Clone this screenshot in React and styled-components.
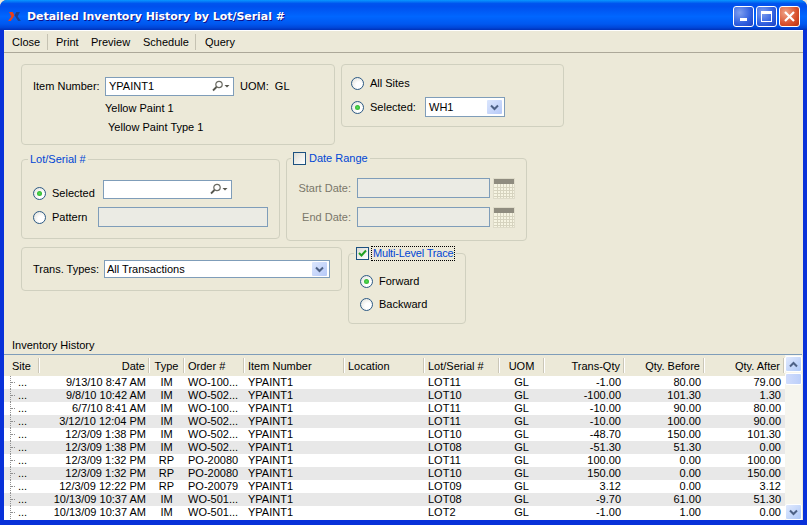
import React from 'react'
import styled, { createGlobalStyle } from 'styled-components'

const Global = createGlobalStyle`
  html, body { margin: 0; padding: 0; overflow: hidden; background: #ece9d8; }
  body { font-family: "Liberation Sans", Arial, sans-serif; font-size: 11px; color: #000; }
`

const COLUMNS = '35px 110px 35px 60px 100px 80px 75px 45px 80px 80px 80px'

const HEADERS = [
  ['Site', 'left'], ['Date', 'right'], ['Type', 'center'], ['Order #', 'left'], ['Item Number', 'left'],
  ['Location', 'left'], ['Lot/Serial #', 'left'], ['UOM', 'center'], ['Trans-Qty', 'right'],
  ['Qty. Before', 'right'], ['Qty. After', 'right'],
]

const ROWS = [
  ['9/13/10 8:47 AM', 'IM', 'WO-100...', 'LOT11', '-1.00', '80.00', '79.00'],
  ['9/8/10 10:42 AM', 'IM', 'WO-502...', 'LOT10', '-100.00', '101.30', '1.30'],
  ['6/7/10 8:41 AM', 'IM', 'WO-100...', 'LOT11', '-10.00', '90.00', '80.00'],
  ['3/12/10 12:04 PM', 'IM', 'WO-502...', 'LOT11', '-10.00', '100.00', '90.00'],
  ['12/3/09 1:38 PM', 'IM', 'WO-502...', 'LOT10', '-48.70', '150.00', '101.30'],
  ['12/3/09 1:38 PM', 'IM', 'WO-502...', 'LOT08', '-51.30', '51.30', '0.00'],
  ['12/3/09 1:32 PM', 'RP', 'PO-20080', 'LOT11', '100.00', '0.00', '100.00'],
  ['12/3/09 1:32 PM', 'RP', 'PO-20080', 'LOT10', '150.00', '0.00', '150.00'],
  ['12/3/09 12:22 PM', 'RP', 'PO-20079', 'LOT09', '3.12', '0.00', '3.12'],
  ['10/13/09 10:37 AM', 'IM', 'WO-501...', 'LOT08', '-9.70', '61.00', '51.30'],
  ['10/13/09 10:37 AM', 'IM', 'WO-501...', 'LOT2', '-1.00', '1.00', '0.00'],
]

const Window = styled.div`
  width: 807px;
  height: 525px;
  display: flex;
  flex-direction: column;
  background: #0831d9;
  border-radius: 7px 7px 0 0;
  overflow: hidden;
`

const TitleBar = styled.div`
  height: 30px;
  flex: none;
  box-sizing: border-box;
  display: flex;
  align-items: center;
  padding: 2px 7px 0 8px;
  background: linear-gradient(180deg, #0997ff 0%, #0053ee 12%, #0050ee 22%, #0066ff 55%, #0058f0 80%, #0046d8 92%, #0031b8 100%);
`

const TitleText = styled.div`
  margin-left: 6px;
  flex: 1;
  font-family: "DejaVu Sans", sans-serif;
  font-size: 11px;
  letter-spacing: -0.05px;
  font-weight: 700;
  color: #fff;
  text-shadow: 1px 1px 0 #0f1089;
`

const WinButton = styled.div`
  width: 21px;
  height: 21px;
  margin-left: 2px;
  box-sizing: border-box;
  border: 1px solid #fff;
  border-radius: 3px;
  display: flex;
  align-items: center;
  justify-content: center;
  background: ${p => p.$close
    ? 'radial-gradient(circle at 30% 30%, #f0a488, #d8502c 60%, #b8300f)'
    : 'radial-gradient(circle at 30% 30%, #7f9fef, #2f5fdf 60%, #1c40c0)'};
`

const Client = styled.div`
  flex: 1;
  margin: 0 4px 5px;
  background: #ece9d8;
  display: flex;
  flex-direction: column;
  min-height: 0;
`

const MenuBar = styled.div`
  height: 21px;
  flex: none;
  display: flex;
  align-items: center;
  padding: 1px 0 0 8px;
  border-bottom: 1px solid #aca899;
  box-shadow: 0 1px 0 #fff inset;
`

const MenuItem = styled.div`
  width: ${p => p.$w}px;
  flex: none;
`

const MenuSep = styled.div`
  width: 1px;
  height: 16px;
  background: #c5c2b2;
  margin-right: ${p => p.$after}px;
  flex: none;
`

const Form = styled.div`
  flex: none;
  padding: 11px 0 0 17px;
  display: flex;
  flex-direction: column;
`

const FormRow = styled.div`
  display: flex;
  align-items: flex-start;
  gap: 6px;
  margin-bottom: ${p => p.$after || 0}px;
`

const Group = styled.div`
  position: relative;
  box-sizing: border-box;
  width: ${p => p.$w}px;
  height: ${p => p.$h}px;
  margin-top: ${p => p.$top || 0}px;
  border: 1px solid #d0d0bf;
  border-radius: 4px;
  padding: ${p => p.$pad || '0'};
  display: flex;
  flex-direction: column;
`

const Legend = styled.div`
  position: absolute;
  left: ${p => p.$left || 6}px;
  top: -7px;
  padding: 0 2px;
  height: 13px;
  line-height: 13px;
  display: flex;
  align-items: center;
  gap: 3px;
  background: #ece9d8;
  color: #0046d5;
`

const FocusLabel = styled.span`
  outline: 1px dotted #000;
  padding: 0 1px;
  letter-spacing: -0.2px;
`

const Row = styled.div`
  display: flex;
  align-items: center;
  height: ${p => p.$h || 20}px;
  margin-bottom: ${p => p.$gap || 0}px;
  padding-left: ${p => p.$indent || 0}px;
`

const Label = styled.span`
  white-space: nowrap;
  flex: none;
  width: ${p => (p.$w ? p.$w + 'px' : 'auto')};
  text-align: ${p => (p.$right ? 'right' : 'left')};
  margin-right: ${p => p.$mr || 0}px;
  color: ${p => (p.$off ? '#7a776a' : '#000')};
`

const Field = styled.div`
  box-sizing: border-box;
  width: ${p => p.$w}px;
  height: ${p => p.$h || 19}px;
  flex: none;
  border: 1px solid #7f9db9;
  background: ${p => (p.$off ? '#ebebe4' : '#fff')};
  display: flex;
  align-items: center;
  padding: 0 2px;
  margin-right: ${p => p.$mr || 0}px;
  margin-bottom: ${p => p.$mb || 0}px;
`

const FieldText = styled.span`
  flex: 1;
  padding-left: ${p => p.$pl || 0}px;
`

const ComboBtn = styled.div`
  width: 15px;
  height: 14px;
  border-radius: 1px;
  background: linear-gradient(135deg, #dbe6fd, #b6c9f8);
  display: flex;
  align-items: center;
  justify-content: center;
`

const RadioBall = styled.div`
  box-sizing: border-box;
  width: 13px;
  height: 13px;
  flex: none;
  border-radius: 50%;
  border: 1px solid #2c5a85;
  background: radial-gradient(circle at 65% 65%, #fff 30%, #dcdcd4 100%);
  margin-right: 6px;
  display: flex;
  align-items: center;
  justify-content: center;
  &::after {
    content: '';
    display: ${p => (p.$on ? 'block' : 'none')};
    width: 5px;
    height: 5px;
    border-radius: 50%;
    background: radial-gradient(circle, #55e055, #24a024);
  }
`

const CheckBox = styled.div`
  box-sizing: border-box;
  width: 13px;
  height: 13px;
  flex: none;
  border: 1px solid #1c5180;
  background: linear-gradient(135deg, #dcdcd4, #fff);
  display: flex;
  align-items: center;
  justify-content: center;
`

const HistoryLabel = styled.div`
  height: 13px;
  line-height: 13px;
  padding-left: 8px;
  margin: 15px 0 2px;
`

const TableBox = styled.div`
  flex: 1;
  min-height: 0;
  margin: 0 1px 0 0;
  border-top: 1px solid #7f9db9;
  background: #fff;
  display: flex;
  overflow: hidden;
`

const TableMain = styled.div`
  flex: 1;
  min-width: 0;
  display: flex;
  flex-direction: column;
  position: relative;
`

const HeaderRow = styled.div`
  display: grid;
  grid-template-columns: ${COLUMNS};
  height: 21px;
  background: #ece9d8;
`

const HeaderCell = styled.div`
  display: flex;
  align-items: center;
  justify-content: ${p => (p.$align === 'right' ? 'flex-end' : p.$align === 'center' ? 'center' : 'flex-start')};
  padding: 0 4px;
  position: relative;
  white-space: nowrap;
  &:first-child {
    padding-left: 8px;
  }
  &::after {
    content: '';
    position: absolute;
    right: 0;
    top: 3px;
    bottom: 3px;
    width: 1px;
    background: #cbc7b8;
    box-shadow: 1px 0 0 #fff;
  }
`

const DataRow = styled.div`
  display: grid;
  grid-template-columns: ${COLUMNS};
  height: 13px;
  line-height: 13px;
  background: ${p => (p.$alt ? '#e8e8e8' : '#fff')};
`

const DataCell = styled.div`
  text-align: ${p => p.$align || 'left'};
  padding: 0 ${p => (p.$align === 'right' ? 3 : 4)}px 0 4px;
  white-space: nowrap;
  overflow: hidden;
`

const TreeCell = styled.div`
  position: relative;
  padding-left: 14px;
  &::before {
    content: '';
    position: absolute;
    left: 6px;
    top: 0;
    bottom: 0;
    border-left: 1px dotted #909090;
  }
  &::after {
    content: '';
    position: absolute;
    left: 7px;
    top: 6px;
    width: 4px;
    border-top: 1px dotted #909090;
  }
`

const ScrollBar = styled.div`
  width: 17px;
  flex: none;
  background: #f6f5ee;
  display: flex;
  flex-direction: column;
  padding-top: 1px;
`

const ScrollBtn = styled.div`
  box-sizing: border-box;
  height: 16px;
  flex: none;
  border: 1px solid #fff;
  border-radius: 2px;
  background: linear-gradient(135deg, #e1eafe, #aec8f7);
  display: flex;
  align-items: center;
  justify-content: center;
`

const ScrollThumb = styled.div`
  box-sizing: border-box;
  height: 12px;
  flex: none;
  margin-top: 1px;
  border: 1px solid #fff;
  border-radius: 2px;
  background: linear-gradient(90deg, #d0dcfc, #bccffa);
`

const ScrollGap = styled.div`
  flex: 1;
`

const Logo = () => (
  <svg width="13" height="11" viewBox="0 0 14 12">
    <path d="M1 1h4l2 3.5L5 8 3 11H0l3.5-5z" fill="#e8401c" />
    <path d="M13 1H9L7 4.5 9 8l2 3h3l-3.5-5z" fill="#1c3f90" />
  </svg>
)

const Minimize = () => (
  <svg width="13" height="13" viewBox="0 0 13 13"><rect x="3" y="8" width="7" height="3" fill="#fff" /></svg>
)

const Maximize = () => (
  <svg width="13" height="13" viewBox="0 0 13 13">
    <rect x="1.5" y="1.5" width="10" height="10" fill="none" stroke="#fff" />
    <rect x="1" y="1" width="11" height="3" fill="#fff" />
  </svg>
)

const CloseX = () => (
  <svg width="13" height="13" viewBox="0 0 13 13">
    <path d="M2 2l9 9M11 2l-9 9" stroke="#fff" strokeWidth="2.2" />
  </svg>
)

const Search = () => (
  <svg width="20" height="12" viewBox="0 0 20 12">
    <circle cx="8" cy="4.5" r="3.2" fill="#fff" stroke="#6a6a62" strokeWidth="1.2" />
    <path d="M5.5 7L2 10.5" stroke="#55554d" strokeWidth="1.8" />
    <path d="M13.5 5h5l-2.5 2.5z" fill="#55554d" />
  </svg>
)

const Chevron = ({ up }) => (
  <svg width="9" height="7" viewBox="0 0 9 7">
    <path d={up ? 'M1 5.5l3.5-3.5L8 5.5' : 'M1 1.5L4.5 5 8 1.5'} fill="none" stroke="#4d6185" strokeWidth="2" />
  </svg>
)

const Check = () => (
  <svg width="11" height="11" viewBox="0 0 11 11">
    <path d="M2 5l2.5 2.5L9 2.5" fill="none" stroke="#21a121" strokeWidth="2" />
  </svg>
)

const Calendar = () => (
  <svg width="22" height="21" viewBox="0 0 22 21">
    <rect x="0.5" y="0.5" width="21" height="20" fill="#f6f4e2" stroke="#dedbc9" />
    <rect x="1" y="1" width="20" height="5" fill="#8f8c7f" />
    {[4, 7, 10, 13, 16, 19].map(x => <rect key={x} x={x} y="6" width="1" height="14" fill="#d6d3bf" />)}
    {[9, 12, 15, 18].map(y => <rect key={y} x="1" y={y} width="20" height="1" fill="#d6d3bf" />)}
  </svg>
)

const Radio = ({ on, w, children }) => (
  <>
    <RadioBall $on={on} />
    <Label $w={w}>{children}</Label>
  </>
)

export default function App() {
  return (
    <>
      <Global />
      <Window>
        <TitleBar>
          <Logo />
          <TitleText>Detailed Inventory History by Lot/Serial #</TitleText>
          <WinButton><Minimize /></WinButton>
          <WinButton><Maximize /></WinButton>
          <WinButton $close><CloseX /></WinButton>
        </TitleBar>
        <Client>
          <MenuBar>
            <MenuItem $w={35}>Close</MenuItem>
            <MenuSep $after={8} />
            <MenuItem $w={35}>Print</MenuItem>
            <MenuItem $w={52}>Preview</MenuItem>
            <MenuItem $w={52}>Schedule</MenuItem>
            <MenuSep $after={9} />
            <MenuItem $w={35}>Query</MenuItem>
          </MenuBar>
          <Form>
            <FormRow $after={13}>
              <Group $w={314} $h={81} $pad="11px 0 0 11px">
                <Row $gap={4}>
                  <Label $w={65} $mr={7}>Item Number:</Label>
                  <Field $w={129} $mr={6}><FieldText $pl={1}>YPAINT1</FieldText><Search /></Field>
                  <Label>UOM:&nbsp; GL</Label>
                </Row>
                <Row $indent={72} $h={16} $gap={3}>Yellow Paint 1</Row>
                <Row $indent={75} $h={16}>Yellow Paint Type 1</Row>
              </Group>
              <Group $w={223} $h={63} $pad="8px 0 0 9px">
                <Row $gap={4}><Radio>All Sites</Radio></Row>
                <Row>
                  <Radio on w={55}>Selected:</Radio>
                  <Field $w={80} $h={20}><FieldText $pl={1}>WH1</FieldText><ComboBtn><Chevron /></ComboBtn></Field>
                </Row>
              </Group>
            </FormRow>
            <FormRow $after={6}>
              <Group $w={259} $h={80} $top={1} $pad="23px 0 0 11px">
                <Legend>Lot/Serial #</Legend>
                <Row $gap={4}>
                  <Radio on w={51}>Selected</Radio>
                  <Field $w={129} $mb={8}><FieldText /><Search /></Field>
                </Row>
                <Row>
                  <Radio w={46}>Pattern</Radio>
                  <Field $w={170} $h={20} $off />
                </Row>
              </Group>
              <Group $w={241} $h={83} $pad="19px 0 0 0">
                <Legend $left={4}><CheckBox />Date Range</Legend>
                <Row $gap={9}>
                  <Label $w={64} $right $mr={6} $off>Start Date:</Label>
                  <Field $w={133} $h={20} $off $mr={3} />
                  <Calendar />
                </Row>
                <Row>
                  <Label $w={64} $right $mr={6} $off>End Date:</Label>
                  <Field $w={133} $h={20} $off $mr={3} />
                  <Calendar />
                </Row>
              </Group>
            </FormRow>
            <FormRow>
              <Group $w={321} $h={44} $pad="12px 0 0 11px">
                <Row $h={18}>
                  <Label $w={64} $mr={7}>Trans. Types:</Label>
                  <Field $w={226} $h={18}><FieldText>All Transactions</FieldText><ComboBtn><Chevron /></ComboBtn></Field>
                </Row>
              </Group>
              <Group $w={118} $h={71} $top={6} $pad="17px 0 0 11px">
                <Legend $left={5}><CheckBox><Check /></CheckBox><FocusLabel>Multi-Level Trace</FocusLabel></Legend>
                <Row $gap={3}><Radio on>Forward</Radio></Row>
                <Row><Radio>Backward</Radio></Row>
              </Group>
            </FormRow>
          </Form>
          <HistoryLabel>Inventory History</HistoryLabel>
          <TableBox>
            <TableMain>
              <HeaderRow>
                {HEADERS.map(([name, align]) => <HeaderCell key={name} $align={align}>{name}</HeaderCell>)}
              </HeaderRow>
              {ROWS.map((r, i) => (
                <DataRow key={i} $alt={i % 2 === 1}>
                  <TreeCell>...</TreeCell>
                  <DataCell $align="right">{r[0]}</DataCell>
                  <DataCell $align="center">{r[1]}</DataCell>
                  <DataCell>{r[2]}</DataCell>
                  <DataCell>YPAINT1</DataCell>
                  <DataCell />
                  <DataCell>{r[3]}</DataCell>
                  <DataCell $align="center">GL</DataCell>
                  <DataCell $align="right">{r[4]}</DataCell>
                  <DataCell $align="right">{r[5]}</DataCell>
                  <DataCell $align="right">{r[6]}</DataCell>
                </DataRow>
              ))}
            </TableMain>
            <ScrollBar>
              <ScrollBtn><Chevron up /></ScrollBtn>
              <ScrollThumb />
              <ScrollGap />
              <ScrollBtn><Chevron /></ScrollBtn>
            </ScrollBar>
          </TableBox>
        </Client>
      </Window>
    </>
  )
}
